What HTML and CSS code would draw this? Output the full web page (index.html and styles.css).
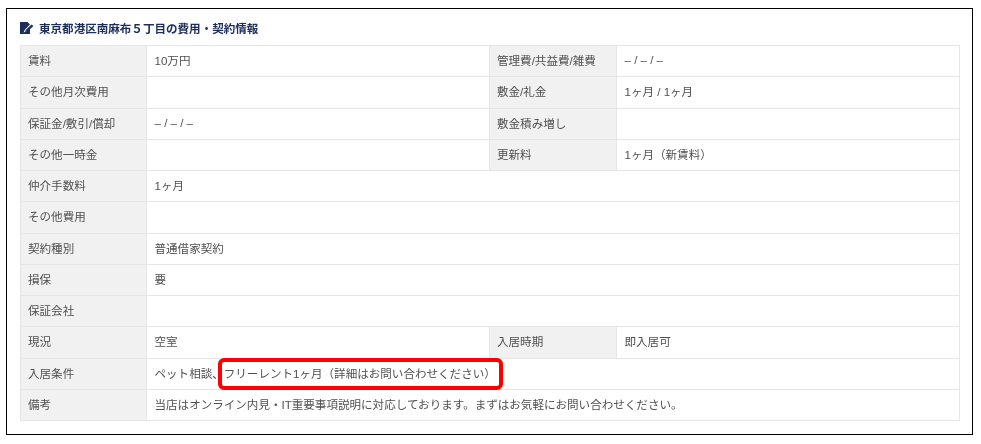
FILE: index.html
```html
<!DOCTYPE html>
<html lang="ja">
<head>
<meta charset="utf-8">
<title>費用・契約情報</title>
<link rel="stylesheet" href="styles.css">
</head>
<body>
<section class="card">
  <h2 class="title">
    <svg class="icon" width="14" height="12" viewBox="0 0 14 12"><path d="M0 0H7.5L10 2.5 5 7.5 3.5 10.5 7 9 10 6.5V12H0Z" fill="#1c2f5c"/><path d="M6 7.7 11.5 2.5 13.5 4 8 9 5 10.3Z" fill="#1c2f5c"/></svg>
    東京都港区南麻布５丁目の費用・契約情報
  </h2>
  <table class="info">
    <colgroup><col class="c1"><col class="c2"><col class="c3"><col class="c4"></colgroup>
    <tr><th>賃料</th><td>10万円</td><th>管理費/共益費/雑費</th><td>– / – / –</td></tr>
    <tr><th>その他月次費用</th><td></td><th>敷金/礼金</th><td>1ヶ月 / 1ヶ月</td></tr>
    <tr><th>保証金/敷引/償却</th><td>– / – / –</td><th>敷金積み増し</th><td></td></tr>
    <tr><th>その他一時金</th><td></td><th>更新料</th><td>1ヶ月（新賃料）</td></tr>
    <tr><th>仲介手数料</th><td colspan="3">1ヶ月</td></tr>
    <tr><th>その他費用</th><td colspan="3"></td></tr>
    <tr><th>契約種別</th><td colspan="3">普通借家契約</td></tr>
    <tr><th>損保</th><td colspan="3">要</td></tr>
    <tr><th>保証会社</th><td colspan="3"></td></tr>
    <tr><th>現況</th><td>空室</td><th>入居時期</th><td>即入居可</td></tr>
    <tr><th>入居条件</th><td colspan="3">ペット相談、フリーレント1ヶ月（詳細はお問い合わせください）</td></tr>
    <tr><th>備考</th><td colspan="3">当店はオンライン内見・IT重要事項説明に対応しております。まずはお気軽にお問い合わせください。</td></tr>
  </table>
  <div class="highlight"></div>
</section>
</body>
</html>
```
FILE: styles.css
```css
html, body { margin: 0; padding: 0; background: #fff; }
body {
  font-family: "Liberation Sans", "Noto Sans CJK JP", sans-serif;
  font-size: 11.56px;
  color: #505050;
}
.card {
  position: relative;
  box-sizing: border-box;
  width: 967px;
  height: 427px;
  margin: 8px 0 0 6px;
  padding: 10px 13px 0 13px;
  border: 1px solid #000;
}
.title {
  display: flex;
  align-items: center;
  gap: 5px;
  height: 18px;
  margin: 0 0 8px;
  font-size: 11.56px;
  font-weight: 700;
  color: #1c2f5c;
  filter: blur(0.3px);
}
.icon { flex: none; }
.info {
  width: 940px;
  table-layout: fixed;
  border-collapse: collapse;
  filter: blur(0.3px);
}
.c1 { width: 126px; }
.c2 { width: 343px; }
.c3 { width: 127px; }
.info th, .info td {
  height: 31.25px;
  box-sizing: border-box;
  padding: 0 7.5px 2px;
  border: 1px solid #e6e6e6;
  text-align: left;
  font-weight: 400;
  vertical-align: middle;
}
.info th { background: #f1f1f1; padding-left: 7px; }
.highlight {
  position: absolute;
  left: 211px;
  top: 349px;
  width: 277px;
  height: 24px;
  border: 4px solid #f00;
  border-radius: 6px;
}
```
